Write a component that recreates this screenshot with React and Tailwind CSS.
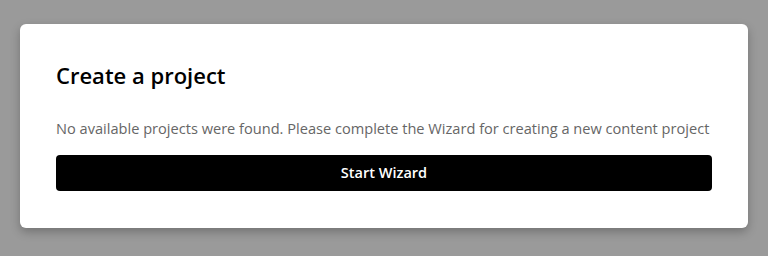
import React from 'react';

const App = () => {
  return (
    <div className="w-[768px] h-[256px] bg-[#9a9a9a] pt-6 px-5 overflow-hidden" style={{ fontFamily: '"Open Sans", "Noto Sans", sans-serif' }}>
      <div className="bg-white rounded-md shadow-[0_4px_10px_rgba(0,0,0,0.25)] px-9 pt-[37px] pb-[37px]">
        <h1 className="text-[22px] leading-7 font-semibold text-black">Create a project</h1>
        <p className="mt-[29px] text-[14.6px] leading-5 text-[#666666] whitespace-nowrap">
          No available projects were found. Please complete the Wizard for creating a new content project
        </p>
        <button className="mt-[17px] w-full h-[36px] bg-black text-white text-[14.5px] font-semibold rounded">
          Start Wizard
        </button>
      </div>
    </div>
  );
};

export default App;
